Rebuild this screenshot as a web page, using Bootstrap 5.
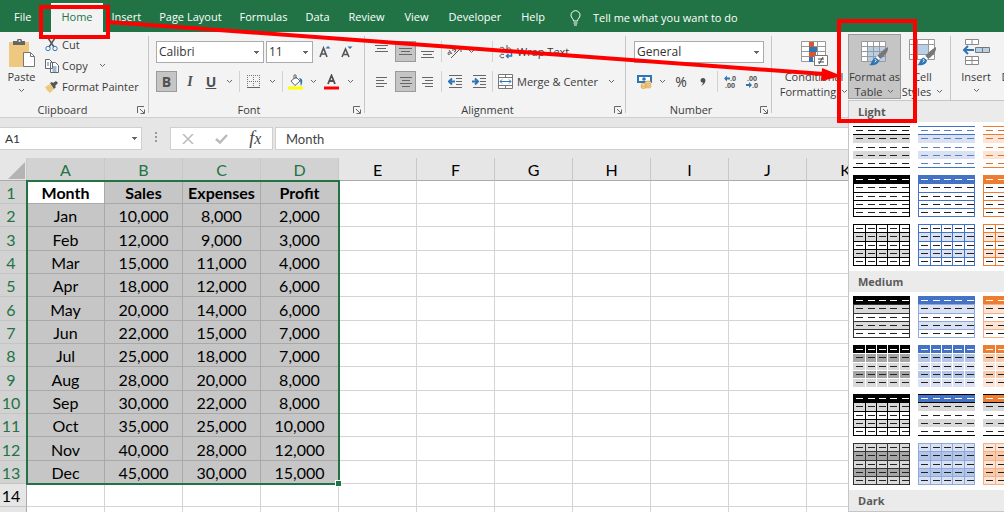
<!DOCTYPE html>
<html lang="en">
<head>
<meta charset="utf-8">
<meta name="viewport" content="width=device-width, initial-scale=1">
<title>Workbook</title>
<link href="https://cdn.jsdelivr.net/npm/bootstrap@5.3.0/dist/css/bootstrap.min.css" rel="stylesheet">
<style>
  :root { --xl-green:#217346; --ink:#3b3b3b; --rule:#c6c6c6; }
  body { font-family:"Open Sans","Noto Sans",sans-serif; font-size:11px; line-height:15px; color:var(--ink); background:#fff; }
  button { color:inherit; font:inherit; background:none; border:0; padding:0; }
  svg { display:block; flex:none; }

  .tabbar { background:var(--xl-green); height:32px; padding:3px 0 0 4px; }
  .tabbar a { color:#fff; text-decoration:none; padding:0 10px; height:29px; line-height:28px; white-space:nowrap; }
  .tabbar .file-tab { margin-right:10px; }
  .tabbar a.snug { padding:0 9px; }
  .tabbar a.active { background:#f3f3f3; color:var(--xl-green); }
  .tell { color:#fff; gap:12px; margin-left:15px; white-space:nowrap; }

  .ribbon { background:#f3f3f3; height:86px; border-bottom:1px solid #cfcfcf; }
  .grp { flex:none; position:relative; padding-top:2px; }
  .grp::after { content:""; position:absolute; right:0; top:4px; bottom:4px; width:1px; background:var(--rule); }
  .grp-body { height:68px; }
  .grp-foot { height:15px; text-align:center; position:relative; }
  .launch { position:absolute; right:4px; top:4px; }
  .g-clip { width:149px; } .g-font { width:216px; } .g-align { width:261px; }
  .g-num { width:146px; } .g-styles { width:179px; }
  .g-cells { flex:1 1 0; min-width:0; overflow:hidden; }
  .g-cells::after { display:none; }

  .tools { display:grid; align-items:center; justify-items:center; height:21px; }
  .stack { padding-top:7px; row-gap:9px; }
  .font-1 { grid-template-columns:108px 2px 47px 24px 20px; }
  .font-2 { grid-template-columns:21px 26px 16px 20px 1px 27px 10px 10px 18px 16px 22px 14px; }
  .align-1 { grid-template-columns:26px 21px 24px 2px 26px 22px 4px 23px 84px 20px; }
  .num-2 { grid-template-columns:20px 16px 22px 22px 6px 22px 22px; }
  .tool { width:21px; height:21px; display:flex; align-items:center; justify-content:center; }
  .tool.on, .big.on { background:#c5c5c5; box-shadow:inset 0 0 0 1px #9a9a9a; }
  .vr-line { width:1px; height:21px; background:#d2d2d2; }
  .drop { appearance:none; width:100%; height:22px; border:1px solid #ababab; border-radius:0; padding:0 2px; font-size:12px; color:#333; line-height:18px;
    background:linear-gradient(#666,#666) no-repeat right 6px top 9px/1px 3px, linear-gradient(#666,#666) no-repeat right 5px top 9px/3px 2px, linear-gradient(#666,#666) no-repeat right 4px top 9px/5px 1px, #fff; }
  .lato { font-family:Lato,sans-serif; }
  .glyph { font-size:14px; font-weight:700; color:#505050; }

  .big { height:65px; padding-top:5px; display:flex; flex-direction:column; align-items:center; white-space:nowrap; }
  .big > svg:first-child { height:28px; }
  .big .l1 { margin-top:2px; }
  .big .l2 { display:flex; align-items:center; gap:5px; }
  .clip-list { margin-left:2px; }
  .clip-row { height:21px; display:flex; align-items:center; gap:3px; white-space:nowrap; }

  .formula { background:#e6e6e6; height:40px; padding-top:9px; }
  .fbox { height:23px; background:#fff; border:1px solid #cfcfcf; border-radius:0; }
  .name-box { width:142px; border-left:0; }
  .name-box select { border:0; height:21px; padding:0 5px; }
  .fx { width:103px; } .dots { width:28px; }
  .fx-glyph { font:italic 400 18px/20px "Liberation Serif",serif; color:#444; }
  .formula input { border:1px solid #cfcfcf; padding:0 10px; outline:0; color:#444; font-size:13px; min-width:0; margin-left:2px; }

  .sheet { table-layout:fixed; width:1041px; border-collapse:separate; border-spacing:0; font-family:Lato,sans-serif; font-size:16px; line-height:20px; color:#000; text-align:center; }
  .sheet th, .sheet td { padding:2px 0 0; border-right:1px solid #d4d4d4; border-bottom:1px solid #d4d4d4; height:23px; }
  .sheet tbody tr:nth-child(3n) > * { height:24px; }
  .sheet th { background:#e6e6e6; font-weight:400; }
  .sheet thead th { border-right-color:#c8c8c8; border-bottom-color:#aaa; }
  .sheet tbody th { border-right-color:#aaa; border-bottom-color:#c4c4c4; padding-right:4px; text-align:center; }
  .sheet th.hot { background:#d2d2d2; color:var(--xl-green); }
  .sheet td.sel { background:#c6c6c6; border-color:#a9a9a9; }
  .sheet td.cur { background:#fff; }
  .sheet tbody tr:first-child td { font-weight:700; }
  .range { position:absolute; left:26px; top:22px; width:314px; height:305px; border:2px solid var(--xl-green); pointer-events:none; }
  .range::after { content:""; position:absolute; right:-3px; bottom:-3px; width:5px; height:5px; background:var(--xl-green); outline:1px solid #fff; }

  .gallery { position:absolute; left:0; top:66px; z-index:5; background:#fff; border:1px solid #c6c6c6; width:206px; }
  .gallery h6 { margin:0; height:21px; line-height:22px; padding-left:9px; font-size:11px; font-weight:700; color:#5a5a5a; background:#ebebeb; }
  .thumbs { display:grid; grid-template-columns:repeat(3,57px); gap:7px 8px; padding:4px 4px 5px; }
  .thumbs button { height:42px; }
  .callout { position:absolute; left:0; top:0; z-index:10; pointer-events:none; }
</style>
</head>
<body class="position-relative vh-100 overflow-hidden d-flex flex-column">

<svg width="0" height="0" class="position-absolute" aria-hidden="true">
  <symbol id="chev" viewBox="0 0 7 5"><path d="M1 1l2.500 2.500L6 1" fill="none" stroke="#666"/></symbol>
  <symbol id="launch" viewBox="0 0 8 8"><path d="M.5 7V.5H7M3 3l4 4M7.500 3.500v4h-4" fill="none" stroke="#666"/></symbol>
  <symbol id="brush" viewBox="0 0 22 20"><path d="M21 0c.8 5-4 10-9 13l-3-3C13 6 17 2 21 0z" fill="#777"/><path d="M9 10l3 3" stroke="#fff" stroke-width="2"/><path d="M8 11l3.500 3c0 4-5 6-10.500 5 3-1 3-7 7-8z" fill="#2e75b6"/><path d="M7 13c2 0 2 2 0 3" stroke="#fff" fill="none"/></symbol>
</svg>

<nav class="tabbar d-flex flex-shrink-0" aria-label="Ribbon tabs">
  <a class="file-tab" href="#">File</a><a class="active" href="#">Home</a><a class="snug" href="#">Insert</a><a class="snug" href="#">Page Layout</a><a class="snug" href="#">Formulas</a><a class="snug" href="#">Data</a><a href="#">Review</a><a href="#">View</a><a href="#">Developer</a><a href="#">Help</a>
  <button class="tell d-flex align-items-center" type="button">
    <svg width="11" height="16" viewBox="0 0 11 16" fill="none" stroke="#fff"><path d="M3.500 11C3.500 8.500 1 8 1 5.200a4.500 4.500 0 0 1 9 0C10 8 7.500 8.500 7.500 11zM3.500 13h4M4 15h3"/></svg>Tell me what you want to do</button>
</nav>

<div class="ribbon d-flex flex-shrink-0">
  <section class="grp g-clip">
    <div class="grp-body d-flex">
      <button class="big" type="button" style="width:43px">
        <svg width="26" height="28" viewBox="0 0 26 28"><path d="M0 3h20v25H0z" fill="#edc87e"/><path d="M4 2h4a2.500 2.500 0 0 1 5 0h3v4H4z" fill="#666"/><circle cx="10.500" cy="2" r="1" fill="#f3f3f3"/><path d="M14.500 13.500h7l4 4v10h-11z" fill="#fff" stroke="#777"/><path d="M21.500 13.500v4h4" fill="none" stroke="#777"/></svg>
        <span class="l1">Paste</span><svg class="mt-1" width="7" height="5"><use href="#chev"/></svg>
      </button>
      <div class="clip-list">
        <button class="clip-row" type="button"><svg width="14" height="14" viewBox="0 0 14 14" fill="none"><path d="M3 0l6 9M10 0L4 9" stroke="#555" stroke-width="1.500"/><circle cx="3" cy="10.500" r="2.200" stroke="#3a78b8"/><circle cx="10" cy="10.500" r="2.200" stroke="#3a78b8"/></svg>Cut</button>
        <button class="clip-row" type="button"><svg width="14" height="14" viewBox="0 0 14 14" fill="#fff" stroke="#666"><path d="M.5.5h4l3 3v6h-7zM5.500 3.500h5l3 3v7h-8z"/><path d="M2 4h2M2 6h2M7.500 8h4M7.500 10h4M7.500 12h4" stroke="#3a78b8"/></svg>Copy<svg class="ms-2" width="7" height="5"><use href="#chev"/></svg></button>
        <button class="clip-row" type="button"><svg width="14" height="12" viewBox="0 0 14 12"><path d="M0 6l5-3 4 5-4 4C4 11 1 9 0 6z" fill="#edc87e"/><path d="M5 2l2-1 1 1 3-2 2 2-3 3 1 1-2 2z" fill="#555"/></svg>Format Painter</button>
      </div>
    </div>
    <div class="grp-foot pe-4">Clipboard<svg class="launch" width="8" height="8"><use href="#launch"/></svg></div>
  </section>

  <section class="grp g-font">
    <div class="grp-body stack d-grid align-content-start" style="padding-left:7px">
      <div class="tools font-1">
        <select class="drop" aria-label="Font"><option>Calibri</option></select><i></i>
        <select class="drop" aria-label="Font size"><option>11</option></select>
        <button type="button" aria-label="Increase font size"><svg width="12" height="14" viewBox="0 0 12 14"><path d="M1 12L4.500 3 8 12M2.500 9h4" fill="none" stroke="#555" stroke-width="1.600"/><path d="M6.500 3.500L9 1l2.500 2.500z" fill="#2e75b6"/></svg></button>
        <button type="button" aria-label="Decrease font size"><svg width="12" height="14" viewBox="0 0 12 14"><path d="M1 12L4.500 4 8 12M2.500 9.500h4" fill="none" stroke="#555" stroke-width="1.600"/><path d="M6.500 1.500L9 4l2.500-2.500z" fill="#2e75b6"/></svg></button>
      </div>
      <div class="tools font-2">
        <button class="tool on glyph" type="button">B</button>
        <button class="glyph fst-italic" style="font-family:'Liberation Serif',serif" type="button">I</button>
        <button class="glyph text-decoration-underline" type="button">U</button>
        <svg width="7" height="5"><use href="#chev"/></svg><span class="vr-line"></span>
        <button type="button" aria-label="Borders"><svg width="14" height="14" viewBox="0 0 14 14"><path d="M.5 0v13M6.500 0v13M12.500 0v13M0 .5h13M0 6.500h13" stroke="#777" stroke-dasharray="1 1"/><path d="M0 12.500h13" stroke="#666"/></svg></button>
        <svg width="7" height="5"><use href="#chev"/></svg><span class="vr-line"></span>
        <button type="button" aria-label="Fill colour"><svg width="16" height="16" viewBox="0 0 16 16"><path d="M3 7l5-4 4 4-5 4.500zM6 5V1h2v4" fill="#fff" stroke="#666"/><path d="M11 4c4 0 4 4 2 8-1-3 0-5-2-8z" fill="#2e75b6"/><path d="M0 12.500h15v3H0z" fill="#ff0"/></svg></button>
        <svg width="7" height="5"><use href="#chev"/></svg>
        <button type="button" aria-label="Font colour"><svg width="16" height="16" viewBox="0 0 16 16"><path d="M4 10L7.500 1.500 11 10M5.500 7h4" fill="none" stroke="#505050" stroke-width="1.800"/><path d="M0 12.500h15v3H0z" fill="#f00"/></svg></button>
        <svg width="7" height="5"><use href="#chev"/></svg>
      </div>
    </div>
    <div class="grp-foot pe-3">Font<svg class="launch" width="8" height="8"><use href="#launch"/></svg></div>
  </section>

  <section class="grp g-align">
    <div class="grp-body stack d-grid align-content-start" style="padding-left:4px">
      <div class="tools align-1">
        <button type="button" aria-label="Top align"><svg width="14" height="14" stroke="#666"><path d="M0 .5h13M2 3.500h9M0 6.500h13"/></svg></button>
        <button class="tool on" type="button" aria-label="Middle align"><svg width="14" height="10" stroke="#666"><path d="M0 1.500h13M2 4.500h9M0 7.500h13"/></svg></button>
        <button type="button" aria-label="Bottom align"><svg width="14" height="14" stroke="#666"><path d="M0 6.500h13M2 9.500h9M0 12.500h13"/></svg></button>
        <span class="vr-line"></span>
        <button type="button" aria-label="Orientation"><svg width="16" height="14" viewBox="0 0 16 14" fill="none" stroke="#555"><path d="M4 13L14 3M10 3h4v4"/><path d="M2 5l3 4M1 8c1-2 3 0 2 1s-2 1-2-1M5 2l4 4M6 6c-1-2 1-3 2-2s1 3-1 3"/></svg></button>
        <svg width="7" height="5" style="justify-self:start"><use href="#chev"/></svg><span class="vr-line"></span>
        <svg width="14" height="14" viewBox="0 0 14 14" fill="none" stroke="#555"><path d="M1 3c2-1 4-1 4 1v3M5 4.500C2 4.500 1 5 1 6s3 1.500 4-.5M8 0v7M8 4c1-2 4-1 4 1s-3 3-4 1M5 9.500C2 8.500 1 10 1 11s1 2.500 4 1.500"/><path d="M12.500 8v3H8M9.500 9L7.500 11l2 2" stroke="#2e75b6" stroke-width="1.500"/></svg>
        <button class="text-nowrap" style="justify-self:start" type="button">Wrap Text</button><i></i>
      </div>
      <div class="tools align-1">
        <button type="button" aria-label="Align left"><svg width="12" height="10" stroke="#666"><path d="M0 .5h11M0 3.500h8M0 6.500h11M0 9.500h8"/></svg></button>
        <button class="tool on" type="button" aria-label="Center"><svg width="12" height="10" stroke="#666"><path d="M0 .5h12M2 3.500h8M0 6.500h12M2 9.500h8"/></svg></button>
        <button type="button" aria-label="Align right"><svg width="12" height="10" stroke="#666"><path d="M0 .5h11M3 3.500h8M0 6.500h11M3 9.500h8"/></svg></button>
        <span class="vr-line"></span>
        <button type="button" aria-label="Decrease indent"><svg width="15" height="13" stroke="#666"><path d="M1 .5h13M8 3.500h6M8 6.500h6M8 9.500h6M1 12.500h13"/><path d="M7 6.500H1.500M4 3.500l-3 3 3 3" fill="none" stroke="#2e75b6" stroke-width="2"/></svg></button>
        <button type="button" aria-label="Increase indent"><svg width="15" height="13" stroke="#666"><path d="M1 .5h13M8 3.500h6M8 6.500h6M8 9.500h6M1 12.500h13"/><path d="M0 6.500h5.500M3 3.500l3 3-3 3" fill="none" stroke="#2e75b6" stroke-width="2"/></svg></button>
        <span class="vr-line"></span>
        <svg width="15" height="15" viewBox="0 0 15 15"><path d="M.5.5h14v14H.5zM.5 3.500h14M.5 11.500h14M7.500 0v3.500M7.500 11.500V15" fill="#fff" stroke="#777"/><path d="M2 7.500h11M4 5.500l-2 2 2 2M11 5.500l2 2-2 2" fill="none" stroke="#2e75b6"/></svg>
        <button class="text-nowrap" style="justify-self:start" type="button">Merge &amp; Center</button>
        <svg width="7" height="5"><use href="#chev"/></svg>
      </div>
    </div>
    <div class="grp-foot pe-3">Alignment<svg class="launch" width="8" height="8"><use href="#launch"/></svg></div>
  </section>

  <section class="grp g-num">
    <div class="grp-body stack d-grid align-content-start" style="padding-left:8px">
      <div class="tools" style="width:130px"><select class="drop" aria-label="Number format"><option>General</option></select></div>
      <div class="tools num-2">
        <button type="button" aria-label="Accounting format"><svg width="15" height="15" viewBox="0 0 15 15"><path d="M1 2h13v6H1z" fill="#fff" stroke="#2e75b6" stroke-width="2"/><circle cx="7" cy="5" r="1.800" fill="#2e75b6"/><g fill="#f3cf94" stroke="#d9a24c" stroke-width=".7"><ellipse cx="11" cy="12.500" rx="3" ry="1.500"/><ellipse cx="11" cy="10.500" rx="3" ry="1.500"/><ellipse cx="11" cy="8.500" rx="3" ry="1.500"/><ellipse cx="6.500" cy="13" rx="2.500" ry="1.500"/><ellipse cx="6.500" cy="11" rx="2.500" ry="1.500"/></g></svg></button>
        <svg width="7" height="5"><use href="#chev"/></svg>
        <button type="button" style="font-size:14px">%</button>
        <button type="button" aria-label="Comma style"><svg width="6" height="8" viewBox="0 0 6 8"><path d="M3 0c4 0 3 6-2 8 1-1 2-2 2-3.500C-.5 4.500 0 0 3 0z" fill="#505050"/></svg></button>
        <span class="vr-line"></span>
        <button type="button"><svg width="14" height="14" font-size="7" font-weight="700" fill="#555"><path d="M0 3.500l3-3v2h3v2H3v2z" fill="#2e75b6"/><text x="6" y="6">.0</text><text x="1" y="13">.00</text></svg></button>
        <button type="button"><svg width="14" height="14" font-size="7" font-weight="700" fill="#555"><path d="M6 10l-3-3v2H0v2h3v2z" fill="#2e75b6"/><text x="1" y="6">.00</text><text x="6" y="13">.0</text></svg></button>
      </div>
    </div>
    <div class="grp-foot pe-3">Number<svg class="launch" width="8" height="8"><use href="#launch"/></svg></div>
  </section>

  <section class="grp g-styles">
    <div class="grp-body d-flex">
      <button class="big ps-2" type="button" style="width:76px">
        <svg width="28" height="28" viewBox="-1 -2 28 28"><path d="M.5.5h24v20H.5zM.5 5.500h24M.5 10.500h24M.5 15.500h24M8.500 0v20M16.500 0v20" fill="#fff" stroke="#999"/><path d="M8 1h5v5H8zM8 11h7v5H8z" fill="#d65532"/><path d="M8 6h8v5H8zM8 16h4v5H8z" fill="#2e75b6"/><path d="M13.500 14.500h13v10h-13z" fill="#fff" stroke="#777"/><path d="M17 18h6M17 21h6M22 16l-4 7" stroke="#444"/></svg>
        <span class="l1">Conditional</span><span class="l2">Formatting<svg width="7" height="5"><use href="#chev"/></svg></span>
      </button>
      <div class="position-relative">
        <button class="big on" type="button" style="width:53px" aria-expanded="true">
          <svg width="30" height="28" viewBox="0 0 30 28"><path d="M1.500 2.500h24v20h-24z" fill="#fff"/><path d="M7 7.500h18v15H7z" fill="#b8cfe8"/><path d="M1.500 2.500h24v20h-24zM1.500 7.500h24M1.500 12.500h24M1.500 17.500h24M7.500 2v20M13.500 2v20M19.500 2v20" fill="none" stroke="#999"/><use href="#brush" x="8" y="8" width="21" height="19"/></svg>
          <span class="l1">Format as</span><span class="l2">Table<svg width="7" height="5"><use href="#chev"/></svg></span>
        </button>
        <div class="gallery" id="gallery"></div>
      </div>
      <button class="big" type="button" style="width:43px">
        <svg width="30" height="28" viewBox="0 0 30 28"><path d="M1.500.5h25v20h-25zM1.500 5.500h25M1.500 15.500h25M9.500.5v20M20.500.5v20" fill="#fff" stroke="#999"/><path d="M10 6h10v9H10z" fill="#b8cfe8"/><use href="#brush" x="8" y="8" width="21" height="19"/></svg>
        <span class="l1">Cell</span><span class="l2">Styles<svg width="7" height="5"><use href="#chev"/></svg></span>
      </button>
    </div>
  </section>

  <section class="grp g-cells">
    <div class="grp-body d-flex">
      <button class="big flex-shrink-0" type="button" style="width:50px">
        <svg width="28" height="28" viewBox="0 0 28 28"><path d="M3.500.5h13v5h-13zM10 .5v5M3.500 17.500h13v8h-13zM3.500 21.500h13M10 17.500v8" fill="#fff" stroke="#888"/><path d="M13.500 8.500h14v5h-14zM20.500 8.500v5" fill="#b8cfe8" stroke="#777"/><path d="M12 11H2M6 7l-4 4 4 4" fill="none" stroke="#2e75b6" stroke-width="2"/></svg>
        <span class="l1">Insert</span><svg class="mt-1" width="7" height="5"><use href="#chev"/></svg>
      </button>
      <button class="big flex-shrink-0" type="button" style="width:34px"><svg width="28" height="28"></svg><span class="l1">Delete</span></button>
    </div>
  </section>
</div>

<div class="formula d-flex align-items-start flex-shrink-0">
  <div class="fbox name-box"><select class="drop lato" aria-label="Name box"><option>A1</option></select></div>
  <div class="dots d-flex justify-content-center pt-1"><svg width="3" height="12" fill="#999"><path d="M0 1h2v2H0zM0 5h2v2H0zM0 9h2v2H0z"/></svg></div>
  <div class="fbox fx d-flex justify-content-around align-items-center">
    <button type="button" aria-label="Cancel"><svg width="12" height="10" stroke="#bbb" stroke-width="1.500"><path d="M1 0l10 10M11 0L1 10"/></svg></button>
    <button type="button" aria-label="Enter"><svg width="13" height="10" fill="none" stroke="#bbb" stroke-width="2.500"><path d="M1 5l4 3.500L12 1"/></svg></button>
    <button class="fx-glyph" type="button">f<small>x</small></button>
  </div>
  <input class="fbox flex-grow-1 lato" aria-label="Formula" value="Month">
</div>

<main class="position-relative flex-grow-1 overflow-hidden" style="min-height:0">
  <table class="sheet" id="sheet"></table>
  <div class="range"></div>
</main>

<svg class="callout" width="930" height="130" fill="none" stroke="#f00" stroke-width="4" aria-hidden="true">
  <path d="M41 7h67v30H41zM839 21h76v100h-76z"/><path d="M108 22l716 52"/><path d="M822 68l20 8-21 5z" fill="#f00" stroke="none"/>
</svg>

<script>
  const data = [['Month','Sales','Expenses','Profit'],['Jan','10,000','8,000','2,000'],['Feb','12,000','9,000','3,000'],['Mar','15,000','11,000','4,000'],['Apr','18,000','12,000','6,000'],['May','20,000','14,000','6,000'],['Jun','22,000','15,000','7,000'],['Jul','25,000','18,000','7,000'],['Aug','28,000','20,000','8,000'],['Sep','30,000','22,000','8,000'],['Oct','35,000','25,000','10,000'],['Nov','40,000','28,000','12,000'],['Dec','45,000','30,000','15,000']];
  const cols = [...'ABCDEFGHIJKLM'];
  let html = '<colgroup><col style="width:27px">' + cols.map(() => '<col style="width:78px">').join('') + '</colgroup><thead><tr><th><svg width="17" height="17" style="margin-left:8px"><path d="M17 0v17H0z" fill="#b4b4b4"/></svg></th>'
    + cols.map((c, i) => `<th class="${i < 4 ? 'hot' : ''}">${c}</th>`).join('') + '</tr></thead><tbody>';
  for (let r = 0; r < 15; r++) {
    html += `<tr><th class="${r < 13 ? 'hot' : ''}">${r + 1}</th>` + cols.map((c, i) => {
      const v = data[r] && data[r][i];
      return `<td class="${v ? 'sel' : ''} ${r + i === 0 ? 'cur' : ''}">${v || ''}</td>`;
    }).join('') + '</tr>';
  }
  document.getElementById('sheet').innerHTML = html + '</tbody>';

  // Table style previews
  const pal = [
    { name:'black', main:'#000', light:'#d9d9d9', mid:'#a6a6a6', line:'#333', ink:'#222' },
    { name:'blue', main:'#4472c4', light:'#d9e1f2', mid:'#b4c6e7', line:'#8ea9db', ink:'#5b7fc4' },
    { name:'orange', main:'#ed7d31', light:'#fce4d6', mid:'#f8cbad', line:'#f4b084', ink:'#d9742f' }
  ];
  const ys = [0, 8, 17, 25, 33, 42], xs = [0, 12, 23, 34, 46, 57];
  function thumb(kind, p, i) {
    let s = '';
    const fill = (r, c) => s += `<rect y="${ys[r]}" width="57" height="${ys[r + 1] - ys[r]}" fill="${c}"/>`;
    const h = (k, c) => s += `<path d="M0 ${Math.min(ys[k], 41) + .5}h57" stroke="${c}"/>`;
    const v = (k, c) => s += `<path d="M${Math.min(xs[k], 56) + .5} 0v42" stroke="${c}"/>`;
    const allH = c => ys.forEach((_, k) => h(k, c)), allV = c => xs.forEach((_, k) => v(k, c));
    const box = c => { v(0, c); v(5, c); };
    const stripes = c => { fill(1, c); fill(3, c); };
    if (kind === 'L1') { stripes(p.light); [0, 1, 5].forEach(k => h(k, p.main)); }
    if (kind === 'L2') { allH(p.main); box(p.main); fill(0, p.main); }
    if (kind === 'L3') { stripes(p.light); allH(p.main); allV(p.main); }
    if (kind === 'M1') { stripes(p.light); allH(p.line); box(p.line); fill(0, p.main); }
    if (kind === 'M2') { [2, 4].forEach(r => fill(r, p.light)); stripes(p.mid); fill(0, p.main); [1, 2, 3, 4].forEach(k => { h(k, '#fff'); v(k, '#fff'); }); }
    if (kind === 'M3') {
      stripes('#d9d9d9');
      if (i === 0) { allH('#000'); allV('#000'); }
      fill(0, p.main); [0, 1, 5].forEach(k => h(k, '#000'));
    }
    if (kind === 'M4') { [0, 2, 4].forEach(r => fill(r, p.light)); stripes(p.mid); allH(p.line); allV(p.line); }
    const head = ['L2', 'M1', 'M2', 'M3'].includes(kind);
    for (let r = 0; r < 5; r++) for (let c = 0; c < 5; c++)
      s += `<path d="M${xs[c] + 3} ${ys[r] + 4.5}h7" stroke="${r === 0 && head ? '#fff' : kind === 'L1' ? p.ink : '#222'}"/>`;
    return `<button type="button" aria-label="${kind} ${p.name}"><svg width="57" height="42">${s}</svg></button>`;
  }
  const block = (title, kinds) => `<h6>${title}</h6>` + (kinds.length ? `<div class="thumbs">${kinds.map(k => pal.map((p, i) => thumb(k, p, i)).join('')).join('')}</div>` : '');
  document.getElementById('gallery').innerHTML = block('Light', ['L1', 'L2', 'L3']) + block('Medium', ['M1', 'M2', 'M3', 'M4']) + block('Dark', []);
</script>
<script src="https://cdn.jsdelivr.net/npm/bootstrap@5.3.0/dist/js/bootstrap.bundle.min.js"></script>
</body>
</html>
